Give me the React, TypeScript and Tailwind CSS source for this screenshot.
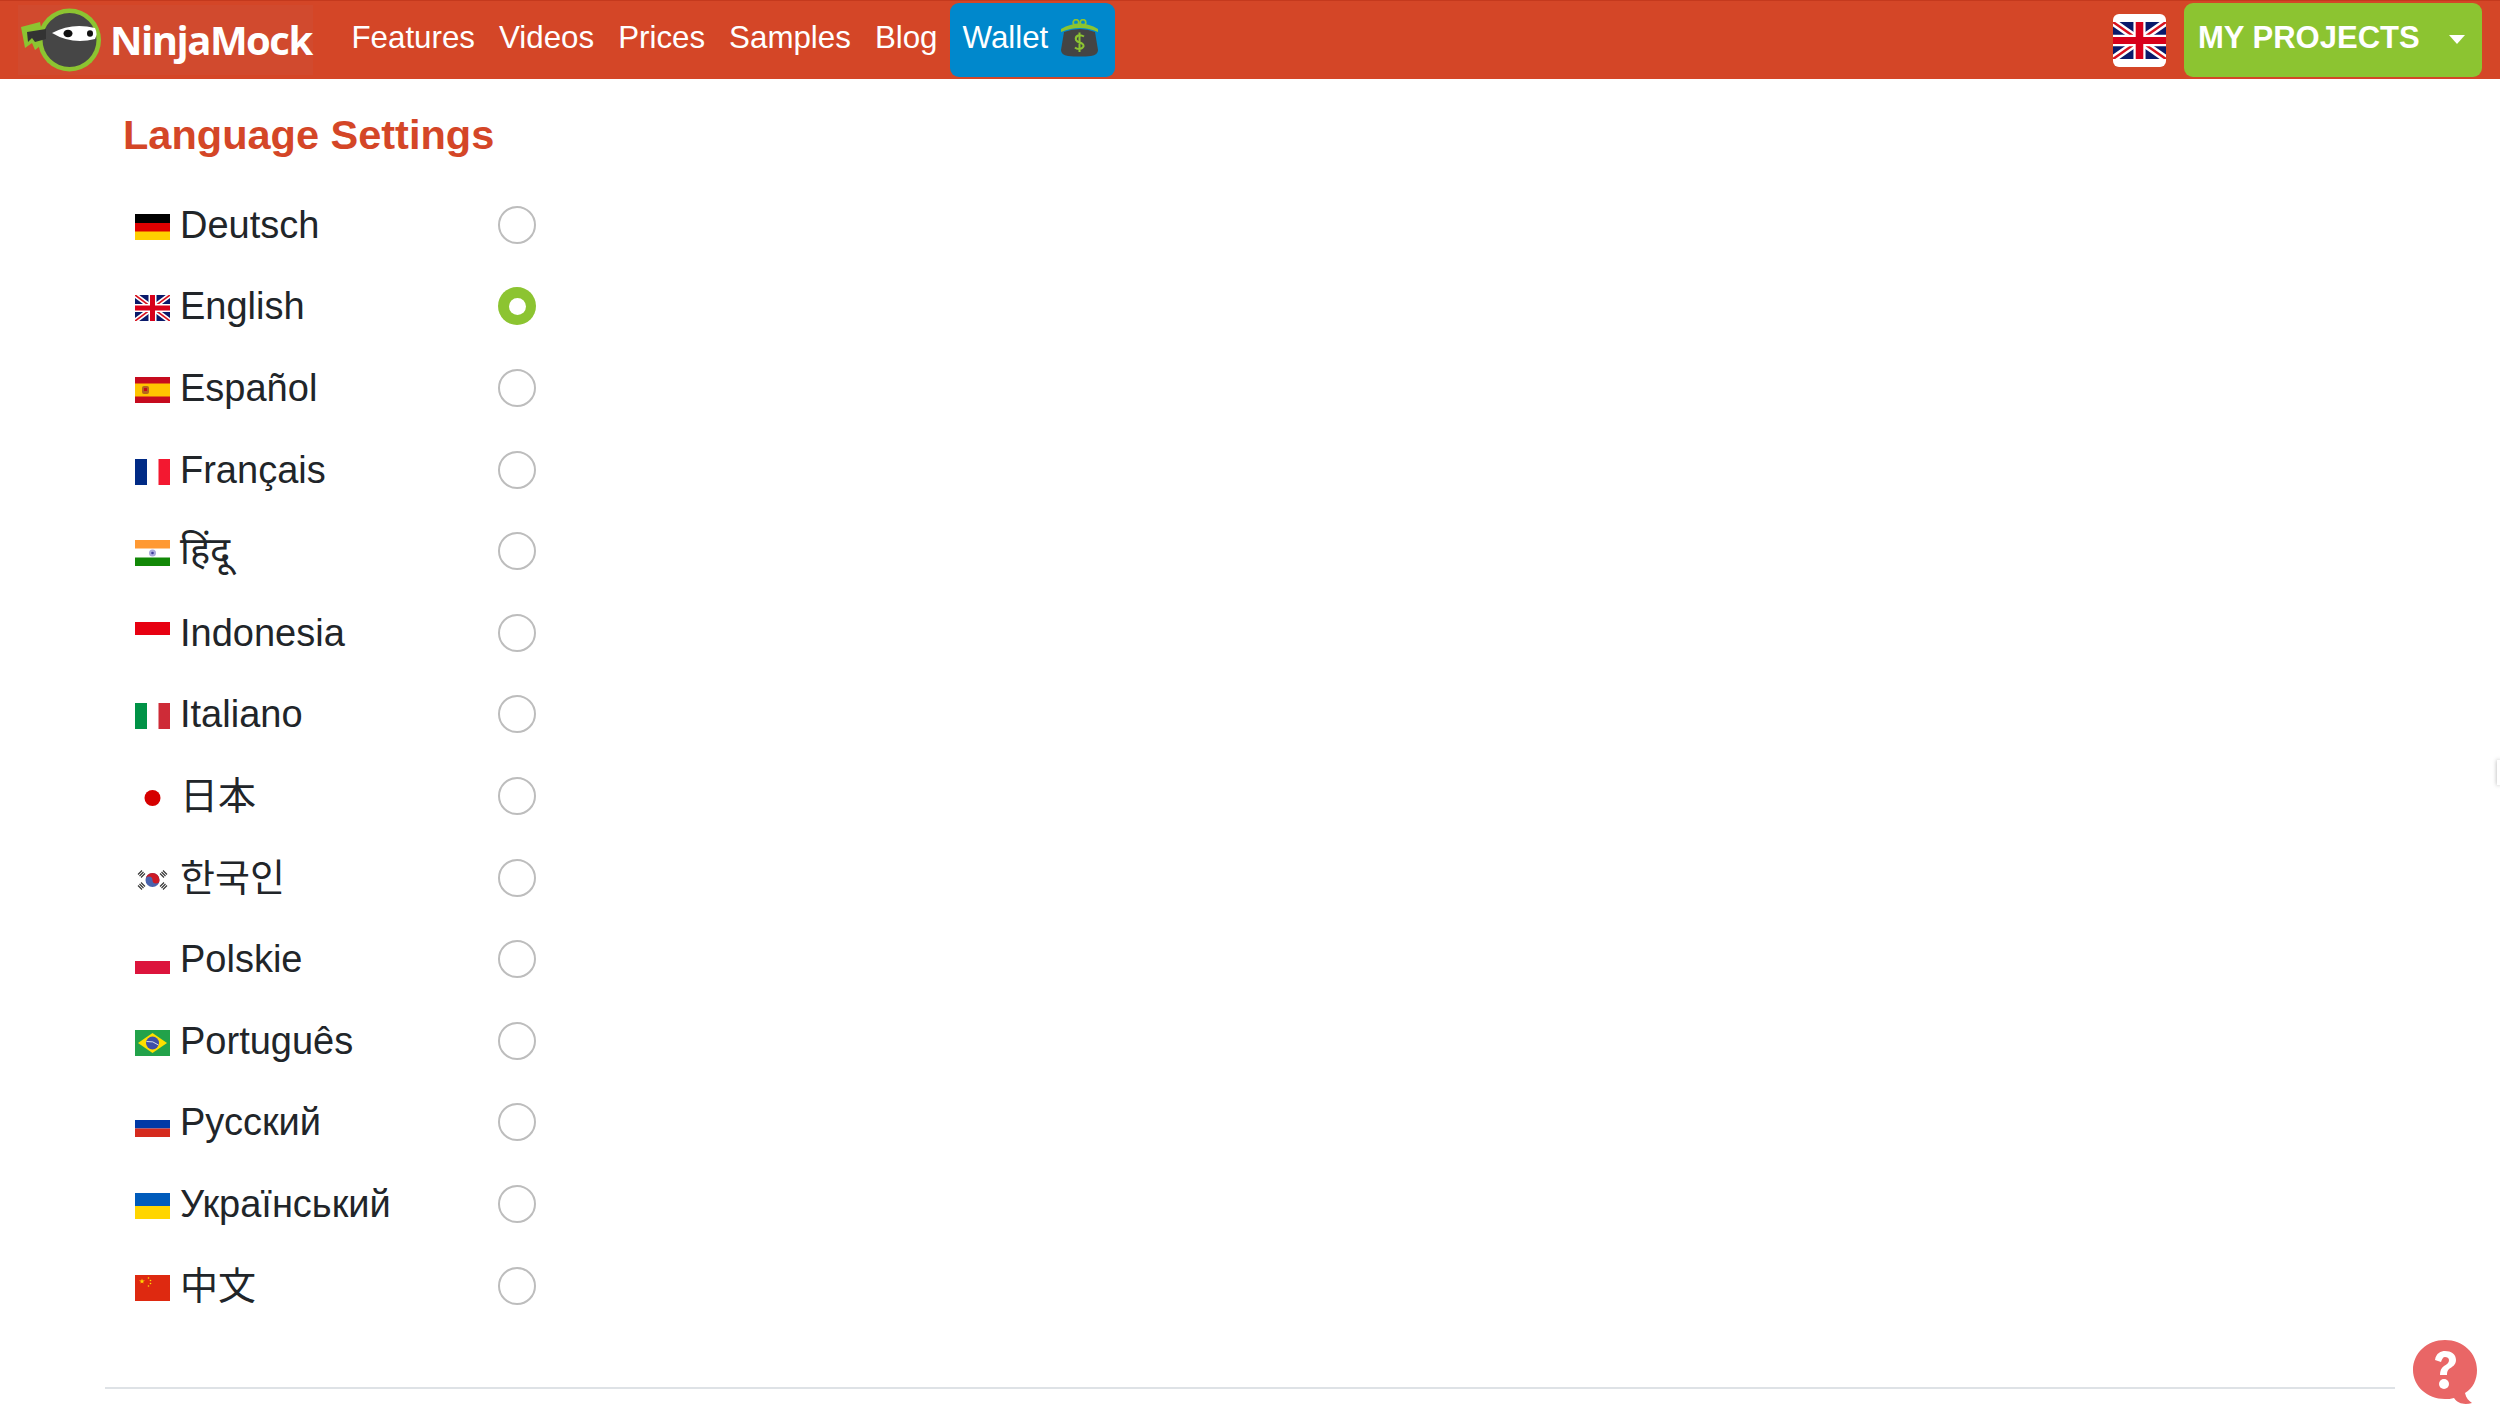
import { useState } from "react";
import type { ReactNode } from "react";

function FlagSvg({ children }: { children: ReactNode }) {
  return (
    <svg viewBox="0 0 35 26" className="h-[26px] w-[35px] shrink-0">
      {children}
    </svg>
  );
}

function UnionJack() {
  return (
    <>
      <rect width="35" height="26" fill="#0a1a6b" />
      <path d="M0 0L35 26M35 0L0 26" stroke="#fff" strokeWidth="5" />
      <path d="M0 0L35 26M35 0L0 26" stroke="#d8121f" strokeWidth="1.7" />
      <path d="M17.5 0V26M0 13H35" stroke="#fff" strokeWidth="8" />
      <path d="M17.5 0V26M0 13H35" stroke="#d8001a" strokeWidth="5" />
    </>
  );
}

const flags: Record<string, ReactNode> = {
  de: (
    <>
      <rect width="35" height="9" fill="#000" />
      <rect y="9" width="35" height="9" fill="#dd0000" />
      <rect y="17.5" width="35" height="8.5" fill="#ffce00" />
    </>
  ),
  en: <UnionJack />,
  es: (
    <>
      <rect width="35" height="26" fill="#c60b1e" />
      <rect y="6.5" width="35" height="13" fill="#ffc400" />
      <rect x="7" y="9" width="7" height="8" rx="2" fill="#b5651d" />
      <rect x="9" y="11" width="3" height="3" fill="#c60b1e" />
    </>
  ),
  fr: (
    <>
      <rect width="12" height="26" fill="#002a85" />
      <rect x="23.5" width="11.5" height="26" fill="#f31830" />
    </>
  ),
  hi: (
    <>
      <rect width="35" height="8.5" fill="#ff9933" />
      <rect y="17.5" width="35" height="8.5" fill="#128807" />
      <circle cx="17.5" cy="13" r="3.5" fill="#a9a8dc" />
      <circle cx="17.5" cy="13" r="1.3" fill="#3f3d9a" />
    </>
  ),
  id: <rect width="35" height="13" fill="#e70011" />,
  it: (
    <>
      <rect width="12" height="26" fill="#009246" />
      <rect x="23.5" width="11.5" height="26" fill="#ce2b37" />
    </>
  ),
  ja: <circle cx="17.5" cy="13" r="8" fill="#d60000" />,
  ko: (
    <>
      <circle cx="17.5" cy="13" r="7" fill="#4a63ae" />
      <path d="M10.5 13a7 7 0 0 1 14 0a3.5 3.5 0 0 1-7 0a3.5 3.5 0 0 0-7 0z" fill="#cd1a26" />
      <path d="M3 7.5L7 3.5M4.5 9L8.5 5M6 10.5L10 6.5M32 7.5L28 3.5M30.5 9L26.5 5M29 10.5L25 6.5M3 18.5L7 22.5M4.5 17L8.5 21M6 15.5L10 19.5M32 18.5L28 22.5M30.5 17L26.5 21M29 15.5L25 19.5" stroke="#333" strokeWidth="1.1" />
    </>
  ),
  pl: <rect y="13" width="35" height="13" fill="#dc143c" />,
  pt: (
    <>
      <rect width="35" height="26" fill="#22a24a" />
      <path d="M17.5 3L32 13L17.5 23L3 13z" fill="#fedf00" />
      <circle cx="17.5" cy="13" r="6.5" fill="#3e4fa8" />
      <path d="M11.5 11.5Q18 10.5 23.5 15" stroke="#fff" strokeWidth="0.8" fill="none" />
    </>
  ),
  ru: (
    <>
      <rect y="0" width="35" height="9" fill="#fff" />
      <rect y="9" width="35" height="8.5" fill="#0039a6" />
      <rect y="17.5" width="35" height="8.5" fill="#d52b1e" />
    </>
  ),
  uk: (
    <>
      <rect width="35" height="13" fill="#005bbb" />
      <rect y="13" width="35" height="13" fill="#ffd500" />
    </>
  ),
  zh: (
    <>
      <rect width="35" height="26" fill="#de2910" />
      <path d="M7 3.5L8.6 8.6L4 5.6H10L5.4 8.6z" fill="#ffde00" />
      <circle cx="13.5" cy="3" r="0.8" fill="#ffde00" />
      <circle cx="15.5" cy="5.5" r="0.8" fill="#ffde00" />
      <circle cx="15.5" cy="8.5" r="0.8" fill="#ffde00" />
      <circle cx="13.5" cy="11" r="0.8" fill="#ffde00" />
    </>
  ),
};

const languages = [
  { code: "de", label: "Deutsch" },
  { code: "en", label: "English" },
  { code: "es", label: "Español" },
  { code: "fr", label: "Français" },
  { code: "hi", label: "हिंदू" },
  { code: "id", label: "Indonesia" },
  { code: "it", label: "Italiano" },
  { code: "ja", label: "日本" },
  { code: "ko", label: "한국인" },
  { code: "pl", label: "Polskie" },
  { code: "pt", label: "Português" },
  { code: "ru", label: "Русский" },
  { code: "uk", label: "Український" },
  { code: "zh", label: "中文" },
];

function NinjaLogo() {
  return (
    <svg viewBox="0 0 84 64" className="h-[64px] w-[84px] shrink-0">
      <path d="M1 19L20 14L24 35L15 42L12 35L5 40z" fill="#8cc431" />
      <circle cx="49.500" cy="32" r="31.500" fill="#8cc431" />
      <circle cx="49.500" cy="32" r="27" fill="#464646" />
      <path d="M7 24L26 21L26 31L15 34L12 30L8 34z" fill="#333" />
      <path d="M32 25Q52 14 75 20Q78 26 75 31Q52 37 32 25z" fill="#fff" />
      <ellipse cx="48" cy="25.500" rx="4.500" ry="3.800" fill="#111" />
      <ellipse cx="70" cy="25.500" rx="3" ry="3.200" fill="#111" />
    </svg>
  );
}

function WalletIcon() {
  return (
    <svg viewBox="0 0 39 39" className="h-[39px] w-[39px] shrink-0">
      <path d="M1 10Q20 -1 38 10L38 13Q20 5 1 13z" fill="#8cc431" />
      <circle cx="16" cy="3.500" r="2.800" fill="none" stroke="#8cc431" strokeWidth="1.800" />
      <circle cx="23" cy="3.500" r="2.800" fill="none" stroke="#8cc431" strokeWidth="1.800" />
      <path d="M4 13Q20 7 35 13L38 31Q38 36 31 37Q20 38 8 37Q1 36 1 31z" fill="#444" />
      <path d="M24 17.500Q21 15.500 18 16.500Q15 18 16 21Q17 23 20 23.500Q24 25 23.500 27.500Q22 30 19 30Q16.500 30 15 28.500M19.500 13.500V33" fill="none" stroke="#8cc431" strokeWidth="2" />
    </svg>
  );
}

const navLinks = ["Features", "Videos", "Prices", "Samples", "Blog"];

export default function App() {
  const [selected, setSelected] = useState("en");

  return (
    <div className="relative h-[1423px] overflow-hidden bg-white font-['Liberation_Sans','Noto_Sans_CJK_KR',sans-serif] text-[#212529]">
      {/* Top bar */}
      <header className="flex h-[79px] items-center border-t border-[#c4391d] bg-[#d44627] pl-[18px] pr-[18px]">
        <a className="flex h-[70px] w-[295px] items-center bg-[#d14a2e] pl-[2px]">
          <NinjaLogo />
          <span className="ml-[6px] font-['Open_Sans',sans-serif] text-[40px] font-bold tracking-[-1.5px] text-white">NinjaMock</span>
        </a>
        <nav className="ml-[26.500px] flex items-center text-[31.300px] text-white">
          {navLinks.map((link) => (
            <a key={link} className="px-[12px] pb-[3px]">
              {link}
            </a>
          ))}
          <a className="flex h-[74px] w-[165px] items-center gap-[12px] rounded-[9px] bg-[#0088cc] pb-[3px] pl-[13px]">
            Wallet
            <WalletIcon />
          </a>
        </nav>
        <div className="ml-auto flex items-center gap-[18px]">
          <div className="flex h-[53px] w-[53px] items-center rounded-[6px] bg-white">
            <svg viewBox="0 0 35 26" preserveAspectRatio="none" className="h-[37px] w-[53px]">
              <UnionJack />
            </svg>
          </div>
          <button className="flex h-[74px] w-[298px] items-center rounded-[9px] bg-[#8cc431] pb-[3px] pl-[14px] text-[31px] font-bold text-white">
            MY PROJECTS
            <span className="ml-[29px] mb-[-1px] h-0 w-0 border-x-[8.500px] border-t-[9px] border-x-transparent border-t-white" />
          </button>
        </div>
      </header>

      {/* Language list */}
      <main className="px-[105px]">
        <h1 className="pl-[18px] pt-[31px] text-[41.500px] font-bold leading-[50px] text-[#d44627]">Language Settings</h1>
        <ul className="ml-[29px] mt-[24px] w-[402px]">
          {languages.map((lang) => (
            <li key={lang.code} className="flex h-[81.600px] cursor-pointer items-center justify-between" onClick={() => setSelected(lang.code)}>
              <div className="flex items-center gap-[10px] pl-px">
                <span className="mt-[4px]">
                  <FlagSvg>{flags[lang.code]}</FlagSvg>
                </span>
                <span className="text-[38px] leading-[44px]">{lang.label}</span>
              </div>
              {selected === lang.code ? (
                <span className="flex h-[38px] w-[38px] items-center justify-center rounded-full bg-[#8cc431]">
                  <span className="h-[17px] w-[17px] rounded-full bg-white" />
                </span>
              ) : (
                <span className="h-[38px] w-[38px] rounded-full border-2 border-[#bdbdbd]" />
              )}
            </li>
          ))}
        </ul>
        <hr className="mt-[61px] border-t-2 border-[#dee2e6]" />
      </main>

      {/* Help bubble */}
      <div className="absolute left-[2413px] top-[1340px]">
        <svg viewBox="0 0 64 66" className="h-[66px] w-[64px]">
          <path d="M32 0C50 0 64 13 64 30C64 40 60 48 52 53C53 58 56 61 59 63C52 65 45 64 41 58C38 59 35 59 32 59C14 59 0 46 0 30C0 13 14 0 32 0z" fill="#e96666" />
          <path d="M22 20C23 13 28 11 32 11C38 11 43 14 43 20C43 25 39 27 36 29C34 31 34 33 34 35H27C27 31 28 28 31 26C34 24 36 23 36 20C36 18 34 17 32 17C30 17 29 19 28 22z" fill="#fff" />
          <circle cx="31" cy="44" r="5" fill="#fff" />
        </svg>
      </div>

      {/* Side tab sliver */}
      <div className="absolute right-0 top-[760px] h-[25px] w-[3px] bg-white shadow-[0_0_4px_rgba(0,0,0,0.35)]" />
    </div>
  );
}
